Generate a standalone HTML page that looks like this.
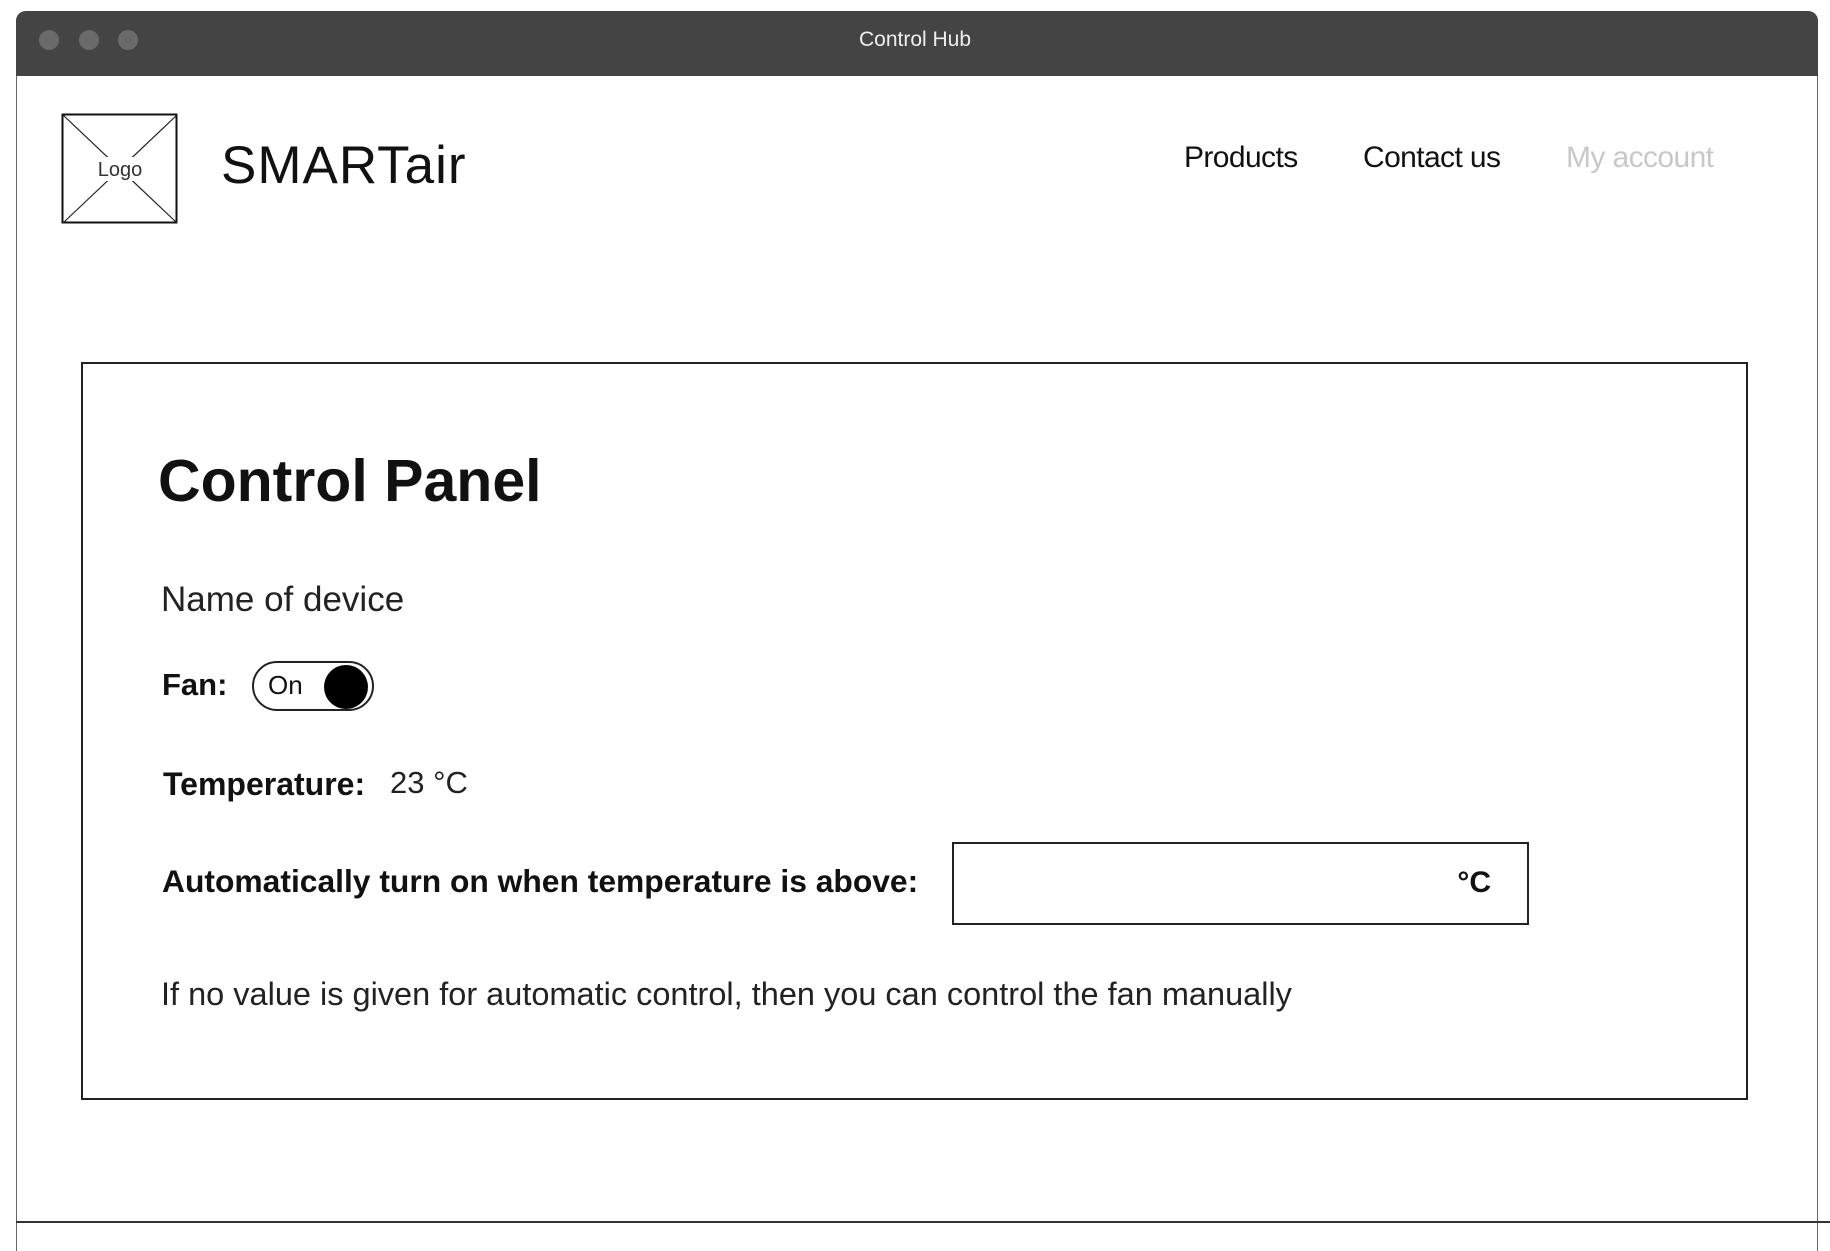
<!DOCTYPE html>
<html><head><meta charset="utf-8"><style>
*{margin:0;padding:0;box-sizing:border-box}
html,body{width:1830px;height:1240px;background:#fff;overflow:hidden;font-family:"Liberation Sans",sans-serif;color:#111}
.abs{position:absolute}
.win{left:16px;top:11px;width:1802px;height:1240px;border:1.5px solid #666;border-radius:10px 10px 0 0;border-bottom:none}
.bar{left:16px;top:11px;width:1802px;height:65px;background:#444;border-radius:10px 10px 0 0}
.dot{width:20px;height:20px;border-radius:50%;background:#6a6a6a;top:30px}
.title{top:28px;left:0;width:1830px;text-align:center;color:#eee;font-size:21px}
.nav{top:141px;font-size:30px;letter-spacing:-0.6px}
.lbl{font-weight:bold;font-size:31px}
</style></head><body>
<div class="abs win"></div>
<div class="abs bar"></div>
<div class="abs dot" style="left:39px"></div>
<div class="abs dot" style="left:79px"></div>
<div class="abs dot" style="left:118px"></div>
<div class="abs title">Control Hub</div>

<svg class="abs" style="left:61px;top:113px" width="118" height="112">
<rect x="1.5" y="1.5" width="114" height="108" fill="#fff" stroke="#111" stroke-width="2"/>
<line x1="2" y1="2" x2="116" y2="110" stroke="#222" stroke-width="1.2"/>
<line x1="116" y1="2" x2="2" y2="110" stroke="#222" stroke-width="1.2"/>
<rect x="30" y="44" width="58" height="24" fill="#fff"/>
<text x="59" y="63" font-family="Liberation Sans" font-size="20" text-anchor="middle" fill="#333">Logo</text>
</svg>
<div class="abs" style="left:221px;top:134px;font-size:53px;line-height:64px;letter-spacing:1px;color:#111">SMARTair</div>

<div class="abs nav" style="left:1184px">Products</div>
<div class="abs nav" style="left:1363px">Contact us</div>
<div class="abs nav" style="left:1566px;color:#c8c8c8">My account</div>

<div class="abs" style="left:81px;top:362px;width:1667px;height:738px;border:2px solid #222"></div>
<div class="abs" style="left:158px;top:446px;font-size:59px;font-weight:bold;line-height:70px">Control Panel</div>
<div class="abs" style="left:161px;top:580px;font-size:35px;line-height:40px;color:#222">Name of device</div>

<div class="abs lbl" style="left:162px;top:667px">Fan:</div>
<div class="abs" style="left:252px;top:661px;width:122px;height:50px;border:2px solid #222;border-radius:25px">
  <span class="abs" style="left:14px;top:7px;font-size:26px">On</span>
  <span class="abs" style="left:70px;top:2px;width:44px;height:44px;border-radius:50%;background:#000"></span>
</div>

<div class="abs lbl" style="left:163px;top:766px;font-size:32px">Temperature:</div>
<div class="abs" style="left:390px;top:765px;font-size:31px;color:#222">23 °C</div>

<div class="abs lbl" style="left:162px;top:863px;font-size:31.8px">Automatically turn on when temperature is above:</div>
<div class="abs" style="left:952px;top:842px;width:577px;height:83px;border:2px solid #222">
  <span class="abs" style="right:36px;top:22px;font-size:30px;font-weight:bold">°C</span>
</div>

<div class="abs" style="left:161px;top:976px;font-size:32.5px;color:#222">If no value is given for automatic control, then you can control the fan manually</div>

<div class="abs" style="left:16px;top:1221px;width:1814px;height:2px;background:#333"></div>
</body></html>
